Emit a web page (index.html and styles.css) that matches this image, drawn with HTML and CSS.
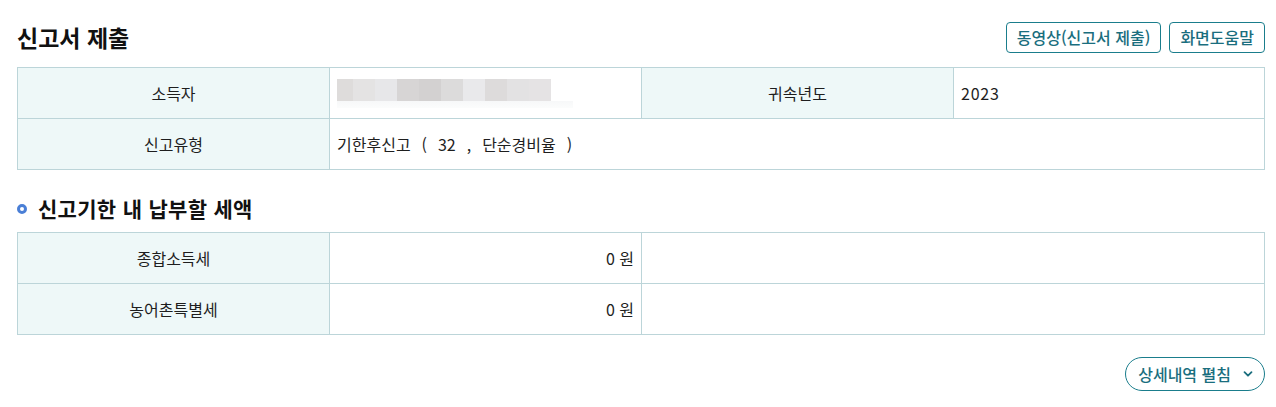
FILE: index.html
```html
<!DOCTYPE html>
<html lang="ko">
<head>
<meta charset="utf-8">
<title>신고서 제출</title>
<link rel="stylesheet" href="styles.css">
</head>
<body>
<div class="page">
  <div class="header">
    <h1 class="title">신고서 제출</h1>
    <div class="actions">
      <button class="btn">동영상(신고서 제출)</button>
      <button class="btn">화면도움말</button>
    </div>
  </div>

  <div class="grid grid-info">
    <div class="cell label">소득자</div>
    <div class="cell value"><span class="blur"></span></div>
    <div class="cell label">귀속년도</div>
    <div class="cell value digits">2023</div>
    <div class="cell label">신고유형</div>
    <div class="cell value span3 wide">기한후신고 ( 32 , 단순경비율 )</div>
  </div>

  <h2 class="section"><span class="dot"></span>신고기한 내 납부할 세액</h2>

  <div class="grid grid-tax">
    <div class="cell label">종합소득세</div>
    <div class="cell value num">0 원</div>
    <div class="cell value"></div>
    <div class="cell label">농어촌특별세</div>
    <div class="cell value num">0 원</div>
    <div class="cell value"></div>
  </div>

  <div class="more-row">
    <button class="more">상세내역 펼침
      <svg class="chev" width="12" height="12" viewBox="0 0 12 12"><path d="M2.5 4.2 L6 7.7 L9.5 4.2" fill="none" stroke="#1a6e7e" stroke-width="1.8" stroke-linecap="round" stroke-linejoin="round"/></svg>
    </button>
  </div>
</div>
</body>
</html>
```

FILE: styles.css
```css
* { box-sizing: border-box; }
html, body { margin: 0; padding: 0; background: #fff; }
body {
  font-family: "Noto Sans CJK KR", "Noto Sans", sans-serif;
  color: #222;
}
.page { padding: 0 11px 0 17px; }

.header {
  display: flex;
  align-items: center;
  justify-content: space-between;
  padding-top: 22px;
  height: 53px;
  margin-bottom: 14px;
}
.title {
  margin: 0;
  font-size: 23px;
  font-weight: 700;
  color: #111;
  line-height: 31px;
}
.actions { display: flex; gap: 8px; }
.btn {
  font-family: inherit;
  height: 31px;
  padding: 0 10px;
  border: 1px solid #1a7d8c;
  border-radius: 4px;
  background: #fff;
  color: #1a6e7e;
  font-size: 16px;
  font-weight: 500;
  line-height: 29px;
}

.grid {
  display: grid;
  border-top: 1px solid #bcd5d9;
  border-left: 1px solid #bcd5d9;
}
.grid-info { grid-template-columns: 312px 312px 312px 1fr; }
.grid-tax { grid-template-columns: 312px 312px 1fr; }
.cell {
  height: 51px;
  border-right: 1px solid #bcd5d9;
  border-bottom: 1px solid #bcd5d9;
  display: flex;
  align-items: center;
  font-size: 16px;
  color: #1e1e1e;
  padding: 0 7px;
}
.label {
  background: #eef8f8;
  justify-content: center;
}
.value { background: #fff; }
.span3 { grid-column: span 3; }
.wide { word-spacing: 6.5px; }
.digits { letter-spacing: 0.8px; }
.num { justify-content: flex-end; }

.blur {
  display: block;
  width: 236px;
  height: 29px;
  margin-top: 1px;
  background:
    linear-gradient(to right,
      #dedcdb 0 16px, #e4e3e3 16px 38px, #e7e7e9 38px 60px,
      #d7d5d5 60px 82px, #d3d1d1 82px 104px, #dcdbdb 104px 126px,
      #e9e9eb 126px 148px, #dddbdb 148px 170px, #e3e2e3 170px 192px,
      #e5e3e4 192px 214px, transparent 214px) top left / 100% 22px no-repeat,
    linear-gradient(#f7f8f9, #fbfcfc) 0 22px / 100% 7px no-repeat;
}

.section {
  display: flex;
  align-items: center;
  margin: 26px 0 12px;
  height: 24px;
  font-size: 21px;
  font-weight: 700;
  color: #111;
  letter-spacing: 0.3px;
}
.dot {
  flex: none;
  width: 10px;
  height: 10px;
  border: 3px solid #4a7fd6;
  border-radius: 50%;
  margin-right: 11px;
  margin-top: 1px;
}

.more-row {
  display: flex;
  justify-content: flex-end;
  margin-top: 22px;
}
.more {
  font-family: inherit;
  display: flex;
  align-items: center;
  gap: 11px;
  height: 34px;
  padding: 0 10px 0 12px;
  border: 1px solid #1a7d8c;
  border-radius: 17px;
  background: #fff;
  color: #1a6e7e;
  font-size: 16px;
  font-weight: 500;
}
.chev { display: block; }
```
